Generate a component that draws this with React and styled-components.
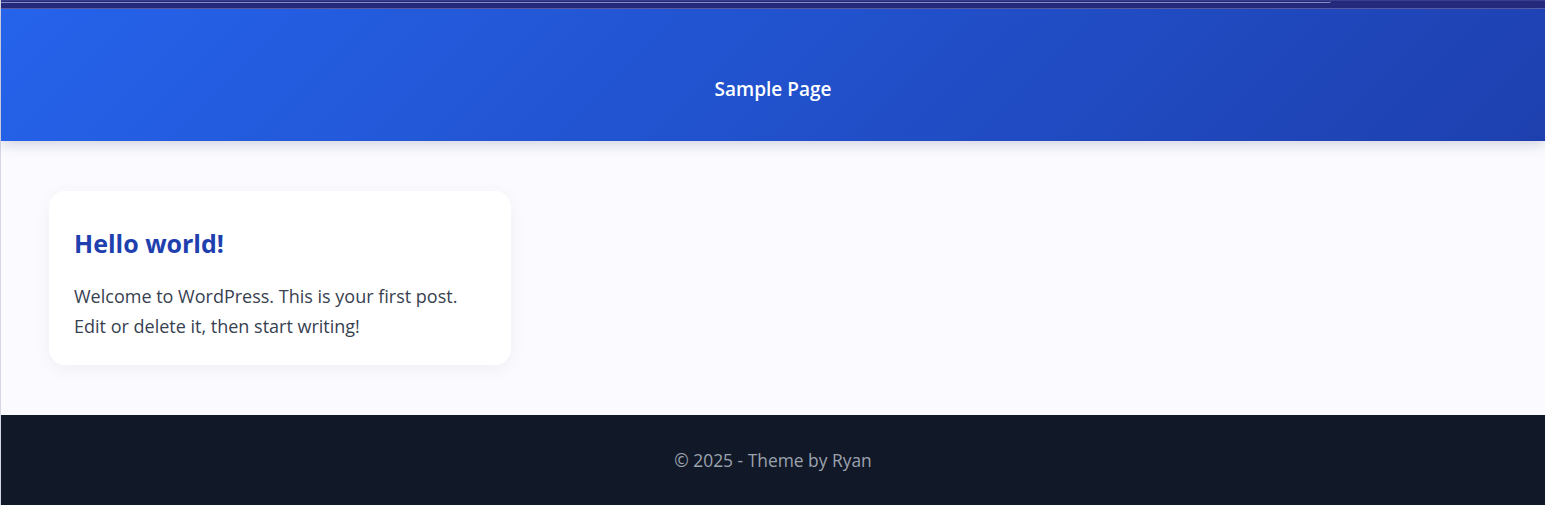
import React from "react";
import styled, { createGlobalStyle } from "styled-components";

const GlobalStyle = createGlobalStyle`
  html, body {
    margin: 0;
    padding: 0;
    background: #fbfbff;
  }
  body {
    font-family: "Open Sans", "Noto Sans", "Liberation Sans", sans-serif;
  }
`;

const Page = styled.div`
  min-height: 505px;
  display: flex;
  flex-direction: column;
  border-left: 1px solid #d6d6e4;
`;

const Frame = styled.div`
  height: 7px;
  background: #262a7c;
  border-top: 1px solid #3a3e8c;
  border-bottom: 1px solid #5a5ea8;
`;

const FrameTab = styled.div`
  width: 1330px;
  height: 1px;
  border-bottom: 1px solid #8a8ec8;
  border-bottom-right-radius: 6px;
`;

const Header = styled.header`
  height: 132px;
  display: flex;
  align-items: center;
  justify-content: center;
  background: linear-gradient(135deg, #2563eb 0%, #1e40af 100%);
  box-shadow: 0 4px 12px rgba(30, 41, 90, 0.18);
  position: relative;
  z-index: 1;
`;

const NavLink = styled.a`
  color: #ffffff;
  font-size: 19px;
  font-weight: 600;
  text-decoration: none;
  margin-top: 28px;
`;

const Main = styled.main`
  flex: 1;
  padding: 50px 48px;
  display: grid;
  grid-template-columns: 462px;
`;

const Card = styled.article`
  background: #ffffff;
  border-radius: 16px;
  padding: 38px 25px 24px;
  box-shadow: 0 4px 16px rgba(40, 40, 90, 0.06);
`;

const PostTitle = styled.h2`
  margin: 0 0 23px;
  color: #1e40af;
  font-size: 25px;
  font-weight: 700;
  line-height: 29px;
`;

const Excerpt = styled.p`
  margin: 0;
  color: #374151;
  font-size: 18px;
  line-height: 30px;
`;

const Footer = styled.footer`
  height: 90px;
  background: #111827;
  display: flex;
  align-items: center;
  justify-content: center;
  color: #9ca3af;
  font-size: 17.4px;
`;

export default function App() {
  return (
    <>
      <GlobalStyle />
      <Page>
        <Frame>
          <FrameTab />
        </Frame>
        <Header>
          <NavLink href="#">Sample Page</NavLink>
        </Header>
        <Main>
          <Card>
            <PostTitle>Hello world!</PostTitle>
            <Excerpt>
              Welcome to WordPress. This is your first post. Edit or delete it,
              then start writing!
            </Excerpt>
          </Card>
        </Main>
        <Footer>© 2025 - Theme by Ryan</Footer>
      </Page>
    </>
  );
}
